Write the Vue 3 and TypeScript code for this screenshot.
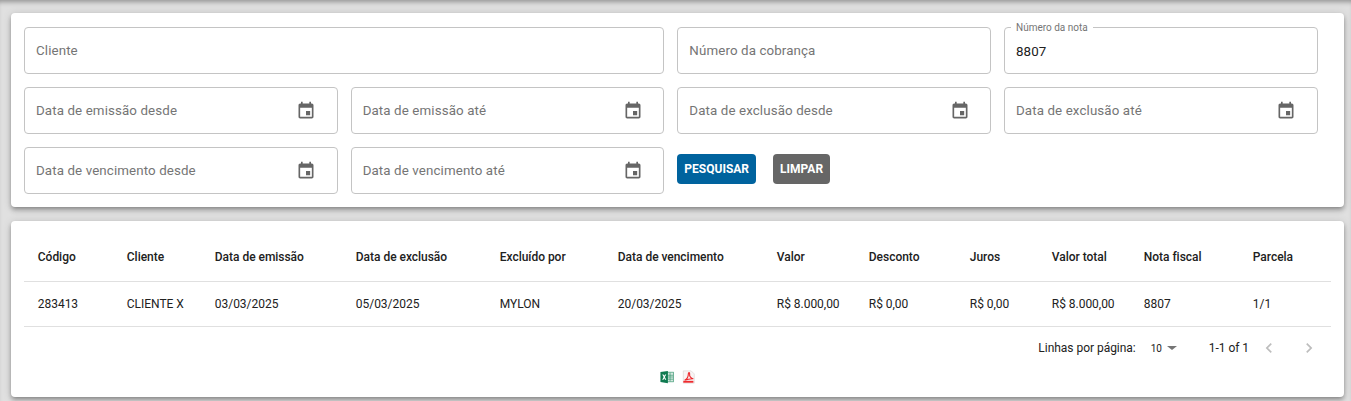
<template>
  <div class="page">
    <section class="card filters">
      <div class="grid">
        <div class="field wide"><span class="hint">Cliente</span></div>
        <div class="field"><span class="hint">Número da cobrança</span></div>
        <div class="field filled">
          <span class="legend">Número da nota</span>
          <span class="value">8807</span>
        </div>
        <div v-for="label in dateFields" :key="label" class="field">
          <span class="hint">{{ label }}</span>
          <svg class="cal" viewBox="0 0 24 24"><path d="M17 12h-5v5h5v-5zM16 1v2H8V1H6v2H5c-1.11 0-1.99.9-1.99 2L3 19c0 1.1.89 2 2 2h14c1.1 0 2-.9 2-2V5c0-1.1-.9-2-2-2h-1V1h-2zm3 18H5V8h14v11z" /></svg>
        </div>
        <div class="actions">
          <button class="btn primary">PESQUISAR</button>
          <button class="btn grey">LIMPAR</button>
        </div>
      </div>
    </section>

    <section class="card results">
      <table>
        <colgroup>
          <col v-for="(w, i) in colWidths" :key="i" :style="{ width: w + 'px' }" />
        </colgroup>
        <thead>
          <tr>
            <th v-for="h in headers" :key="h">{{ h }}</th>
          </tr>
        </thead>
        <tbody>
          <tr>
            <td v-for="(c, i) in row" :key="i">{{ c }}</td>
          </tr>
        </tbody>
      </table>

      <div class="pager">
        <span class="rows-label">Linhas por página:</span>
        <span class="rows-select">10<i class="caret" /></span>
        <span class="range">1-1 of 1</span>
        <svg class="nav" viewBox="0 0 24 24"><path d="M15.41 7.41 14 6l-6 6 6 6 1.41-1.41L10.83 12z" /></svg>
        <svg class="nav" viewBox="0 0 24 24"><path d="M10 6 8.59 7.41 13.17 12l-4.58 4.59L10 18l6-6z" /></svg>
      </div>

      <div class="exports">
        <svg class="file" viewBox="0 0 16 16">
          <rect x="8" y="2.5" width="7.5" height="11" fill="#d5e8df" stroke="#3f9a75" stroke-width=".8" />
          <path d="M11.500 3v10M9 6h6M9 8h6M9 10.500h6" stroke="#3f9a75" stroke-width=".8" fill="none" />
          <path d="M.5 2.200 9 1v14L.5 13.800z" fill="#0f7a50" />
          <path d="M2.500 5h1.500L4.900 6.600 5.800 5h1.400L5.600 8l1.600 3H5.800L4.900 9.400 4 11H2.500L4.200 8z" fill="#fff" />
        </svg>
        <svg class="file" viewBox="0 0 16 16">
          <path d="M1.500 1h9l3.500 3.500V15H1.500z" fill="#f8f4f4" stroke="#ded6d6" stroke-width=".8" />
          <path d="M3 11.800c2.800-1.300 4.200-4.300 4.300-7.500.1-2 1.700-1.600 1.400.4-.4 2.800 1.500 4.900 4.300 5.300-3.200-.2-6.400.4-10 1.800z" fill="none" stroke="#ee2a2e" stroke-width="1.300" />
          <rect x="1.500" y="12.400" width="11.500" height="2.100" fill="#ee2a2e" />
        </svg>
      </div>
    </section>
  </div>
</template>

<script setup lang="ts">
const dateFields: string[] = [
  'Data de emissão desde',
  'Data de emissão até',
  'Data de exclusão desde',
  'Data de exclusão até',
  'Data de vencimento desde',
  'Data de vencimento até',
]

const headers: string[] = [
  'Código', 'Cliente', 'Data de emissão', 'Data de exclusão', 'Excluído por', 'Data de vencimento',
  'Valor', 'Desconto', 'Juros', 'Valor total', 'Nota fiscal', 'Parcela',
]

const row: string[] = [
  '283413', 'CLIENTE X', '03/03/2025', '05/03/2025', 'MYLON', '20/03/2025',
  'R$ 8.000,00', 'R$ 0,00', 'R$ 0,00', 'R$ 8.000,00', '8807', '1/1',
]

const colWidths: number[] = [89, 88, 141, 144, 118, 159, 92, 101, 82, 92, 109, 92]
</script>

<style>
html, body {
  margin: 0;
  background: #e0e0e0;
}
</style>

<style scoped>
.page {
  height: 401px;
  box-sizing: border-box;
  padding: 13px 7px 0 11px;
  overflow: hidden;
  font-family: Roboto, "Liberation Sans", sans-serif;
  background: #e0e0e0;
  box-shadow: inset 0 5px 5px -3px rgba(0, 0, 0, 0.35);
}

.card {
  background: #fff;
  border-radius: 4px;
  box-shadow: 0 2px 4px -1px rgba(0, 0, 0, 0.3), 0 4px 5px rgba(0, 0, 0, 0.14), 0 1px 10px rgba(0, 0, 0, 0.12);
}

.filters {
  height: 194px;
  box-sizing: border-box;
  padding: 14px 26.33px 0 13px;
  margin-bottom: 14px;
}

.grid {
  display: grid;
  grid-template-columns: repeat(4, 1fr);
  column-gap: 13px;
  row-gap: 13px;
}

.field {
  position: relative;
  height: 47px;
  box-sizing: border-box;
  border: 1px solid #c4c4c4;
  border-radius: 4px;
  display: flex;
  align-items: center;
  justify-content: space-between;
  padding: 0 20.5px 0 11px;
}

.wide {
  grid-column: span 2;
}

.hint {
  font-size: 13.33px;
  letter-spacing: 0.11px;
  color: #757575;
}

.value {
  font-size: 13.33px;
  letter-spacing: 0.11px;
  color: #212121;
  padding-top: 1px;
}

.legend {
  position: absolute;
  top: -7px;
  left: 6px;
  padding: 0 5px;
  background: #fff;
  font-size: 10px;
  line-height: 13px;
  color: #757575;
}

.cal {
  width: 20px;
  height: 20px;
  fill: #666;
}

.actions {
  display: flex;
  align-items: flex-start;
  gap: 17px;
  padding-top: 7px;
}

.btn {
  height: 30px;
  padding: 0 7px;
  border: 0;
  border-radius: 4px;
  font-family: inherit;
  font-size: 12px;
  font-weight: 700;
  color: #fff;
}

.primary {
  background: #00639e;
}

.grey {
  background: #666;
}

.results {
  height: 176px;
  box-sizing: border-box;
  padding: 0 13px;
}

table {
  width: 1307px;
  table-layout: fixed;
  border-collapse: collapse;
}

th, td {
  padding: 0 0 0 13.8px;
  text-align: left;
  font-size: 12px;
  letter-spacing: -0.03px;
  color: #212121;
  border-bottom: 1px solid #e0e0e0;
  white-space: nowrap;
}

th {
  height: 60px;
  font-weight: 500;
  padding-top: 13px;
  box-sizing: border-box;
}

td {
  height: 44px;
  font-weight: 400;
}

.pager {
  display: flex;
  align-items: center;
  justify-content: flex-end;
  height: 43px;
  font-size: 12px;
  letter-spacing: -0.03px;
  color: #212121;
  padding-right: 12px;
}

.rows-select {
  display: flex;
  align-items: center;
  margin-left: 15px;
  font-size: 10px;
  width: 44px;
}

.caret {
  margin-left: 5px;
  border-left: 5px solid transparent;
  border-right: 5px solid transparent;
  border-top: 4px solid #757575;
}

.range {
  margin-left: 14px;
  margin-right: 10px;
}

.nav {
  width: 20px;
  height: 20px;
  fill: #bdbdbd;
}

.nav + .nav {
  margin-left: 20px;
}

.exports {
  display: flex;
  justify-content: center;
  gap: 8px;
}

.file {
  width: 14px;
  height: 14px;
}
</style>
